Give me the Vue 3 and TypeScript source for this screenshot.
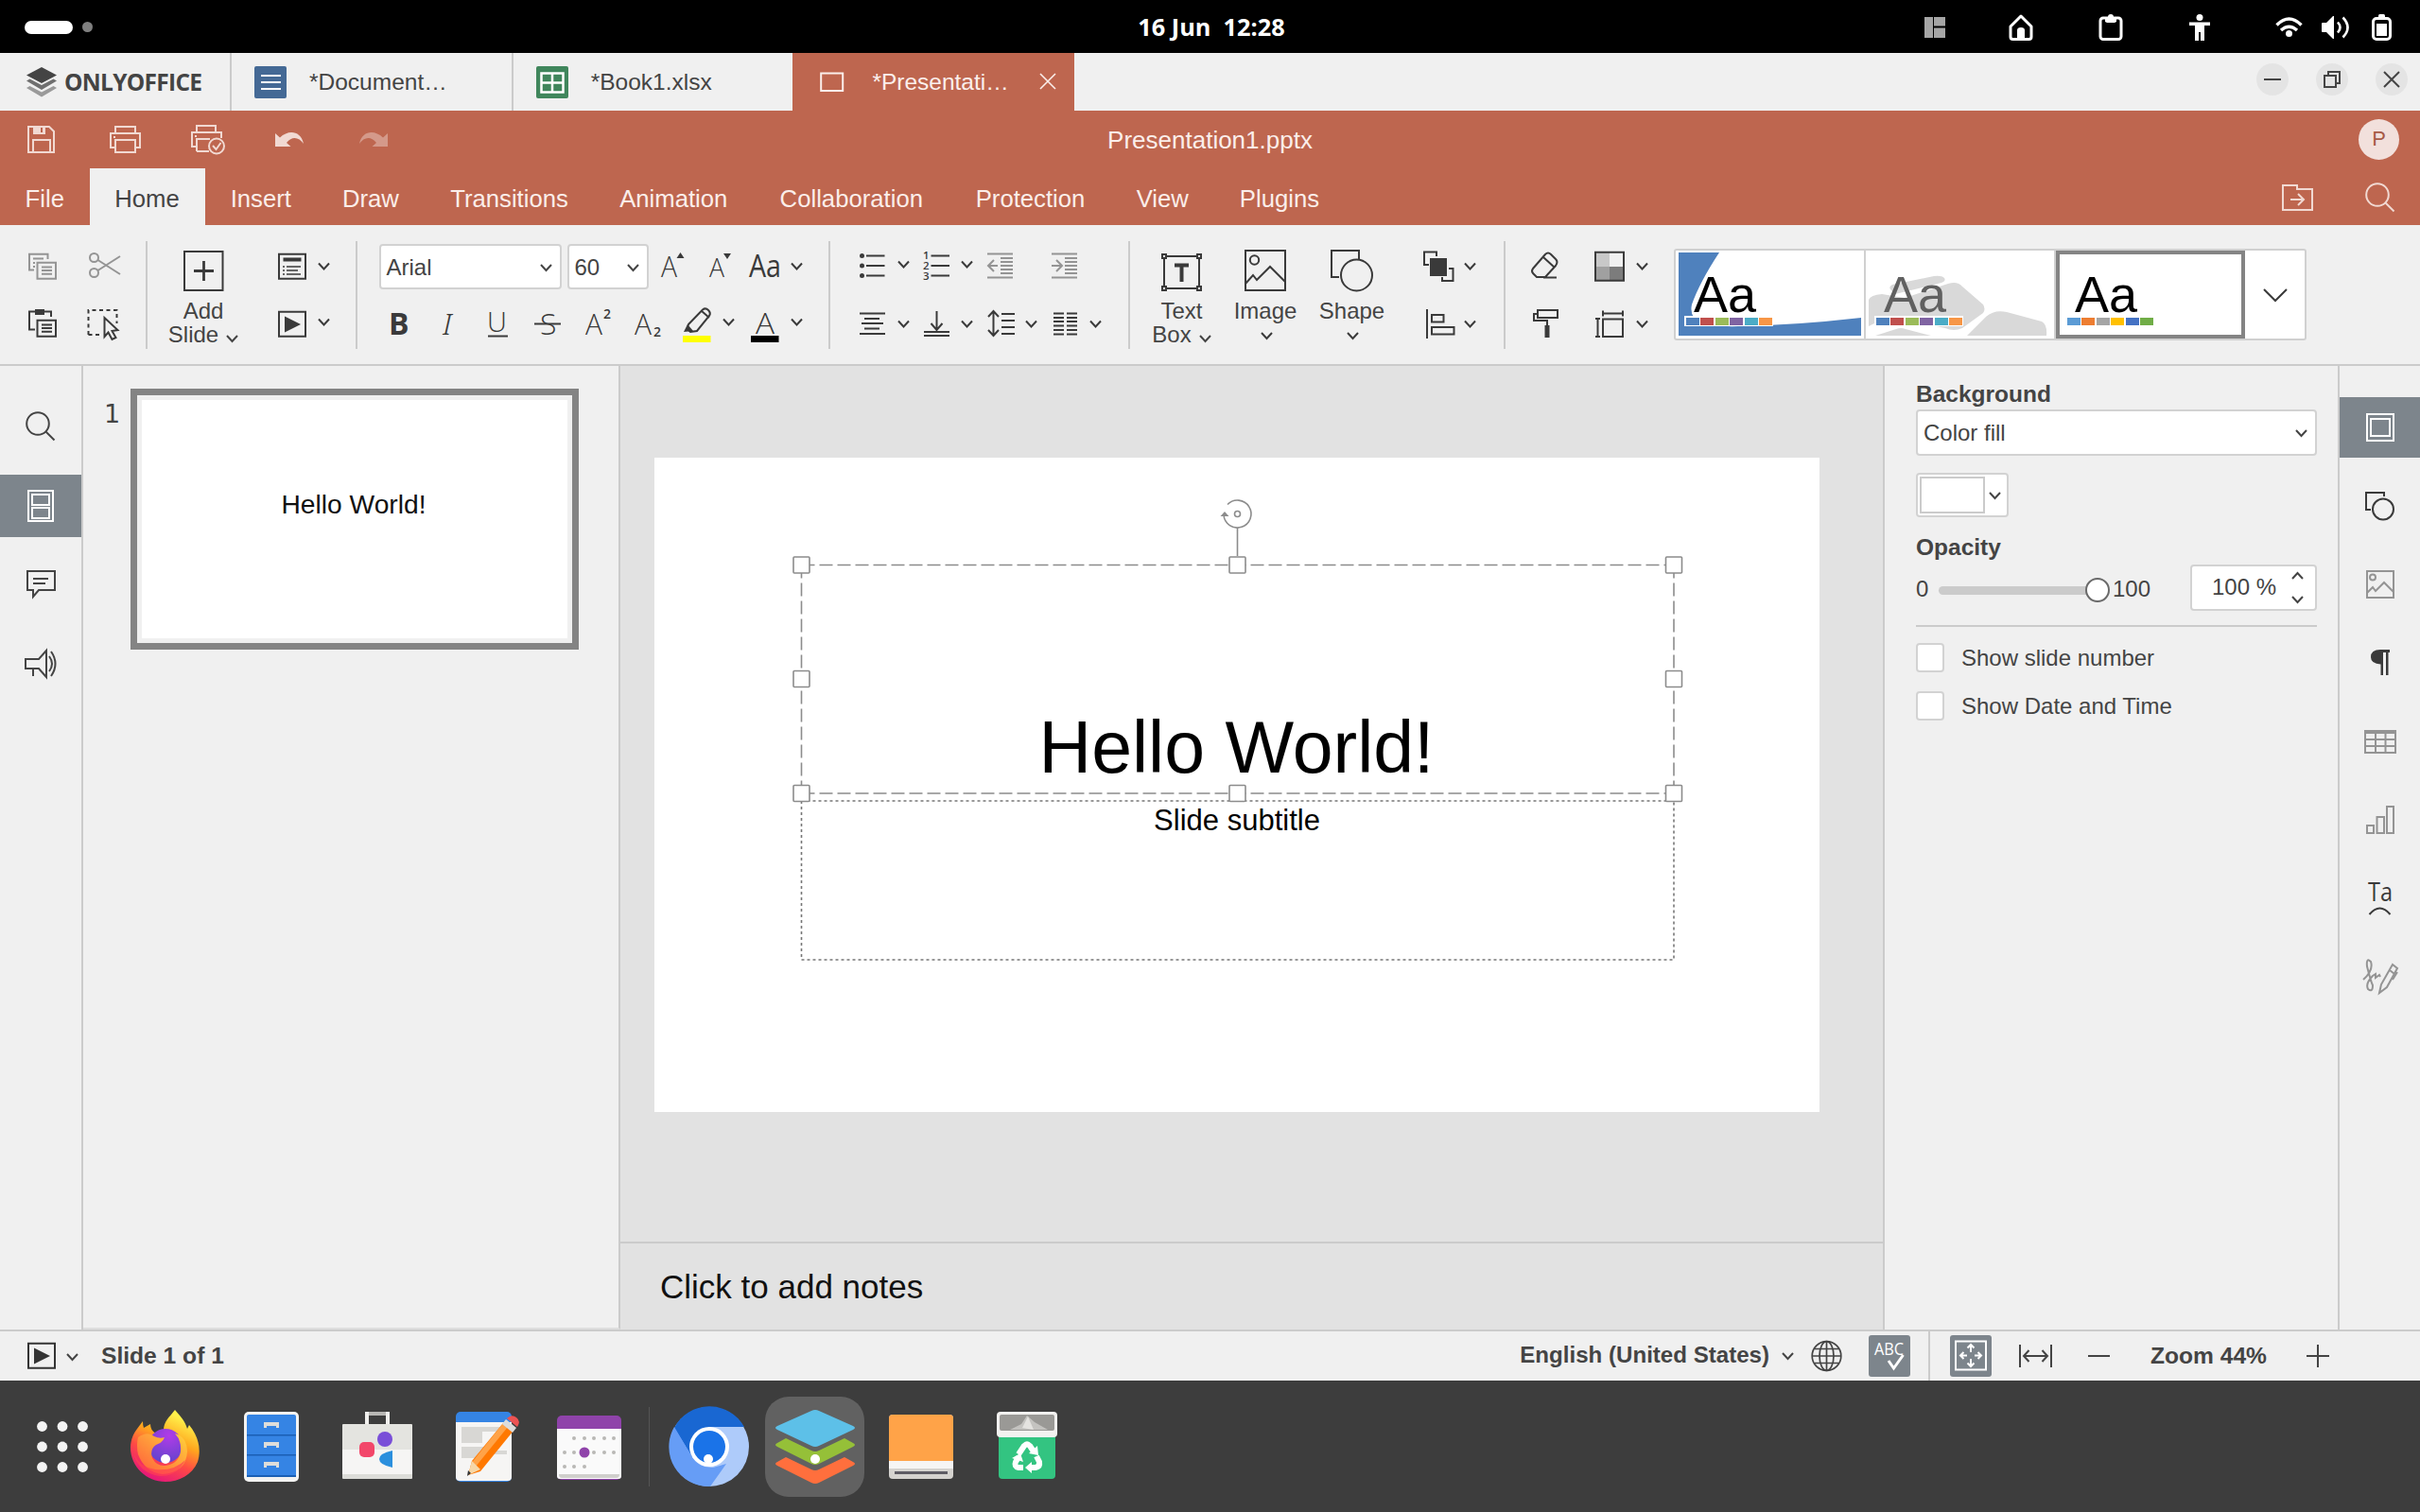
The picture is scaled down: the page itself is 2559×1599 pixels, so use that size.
<script setup lang="ts">
import { h, type FunctionalComponent } from 'vue'

type Glyph = [width: number, height: number, markup: string]

const glyphs: Record<string, Glyph> = {
  // system bar
  tiling: [22, 22, '<g fill="#a6a6a6" stroke="none"><path d="M0 0h9v22H0zM10 0h12v9.500H10zM10 11.500h12V22H10z"/></g>'],
  home: [26, 28, '<path stroke-width="3" stroke-linejoin="round" d="M13 2 2 13v11q0 2.500 2.500 2.500h17Q24 26.500 24 24V13z"/><path fill="currentColor" stroke="none" d="M9 27V17q0-3 4-3t4 3v10z"/>'],
  clipboard: [26, 28, '<rect x="2" y="4" width="22" height="22.500" rx="3" stroke-width="3"/><path fill="currentColor" stroke="none" d="M7 3h3q0-3 3-3t3 3h3v5l-2 1H9L7 8z"/>'],
  person: [22, 28, '<g fill="currentColor" stroke="none"><circle cx="11" cy="3.500" r="3.500"/><path d="M0 8.500h22V12h-6v16h-4v-9h-2v9H6V12H0z"/></g>'],
  wifi: [29, 22, '<g stroke-width="3.400"><path d="M1.500 8.500Q14.500-4.500 27.500 8.500"/><path d="M6 14q8.500-7.500 17 0"/></g><circle cx="14.500" cy="17.500" r="3.500" fill="currentColor" stroke="none"/>'],
  volume: [29, 26, '<path fill="currentColor" stroke="none" d="M0 9q0-1 1-1h4l7-7h1v24h-1l-7-7H1q-1 0-1-1z"/><path stroke-width="2.600" d="M17 7.500q5 5.500 0 11M22.500 2.500q10 10.500 0 21"/>'],
  battery: [21, 28, '<rect x="1.500" y="4.500" width="18" height="22" rx="3.500" stroke-width="3"/><rect x="7" y="0" width="7" height="4" rx="1.500" fill="currentColor" stroke="none"/><path fill="currentColor" stroke="none" d="M5 10h11v13H5z"/>'],
  // window tabs
  brand: [32, 32, '<g stroke="none" fill="#444"><path d="M16 0 32 8.500 16 17 0 8.500z"/><path opacity=".75" d="m0 14.500 3.500-2L16 19l12.500-6.500 3.500 2L16 24z"/><path opacity=".5" d="m0 22 3.500-2L16 26.500 28.500 20l3.500 2L16 31.500z"/></g>'],
  doc: [34, 34, '<rect width="34" height="34" rx="2" fill="#446995" stroke="none"/><path stroke="#fff" d="M7 10h21M7 17h21M7 24h21"/>'],
  sheet: [34, 34, '<rect width="34" height="34" rx="2" fill="#40865c" stroke="none"/><path stroke="#fff" stroke-width="2.500" d="M5.500 7.500h23v20h-23zM17 7.500v20M5.500 17.500h23"/>'],
  deck: [26, 22, '<rect x="1.200" y="1.500" width="23" height="18.500"/>'],
  x: [18, 18, '<path d="m1 1 16 16M17 1 1 17"/>'],
  min: [18, 4, '<path d="M0 2h18"/>'],
  restore: [18, 18, '<path d="M1 5h12v12H1zM5 5V1h12v12h-4"/>'],
  // quick access
  save: [29, 29, '<path d="M1 1h22l5 5v22H1zM6 28V15h18v13"/><path fill="currentColor" stroke="none" d="M6 1h13v8H6z"/><path stroke="#be664f" d="M15 2v5"/>'],
  print: [33, 29, '<path d="M6 8V1h21v7M6 23H1V8h31v15h-5M6 15h21v13H6z"/><path d="M4 12h2"/>'],
  qprint: [36, 31, '<path d="M6 8V1h20v7M6 23H1V8h31v6M6 28V15h14M6 28h13"/><path d="M4 12h2"/><circle cx="27" cy="22.500" r="8"/><path d="m23 22 3.500 4 5-7"/>'],
  undo: [30, 18, '<path fill="currentColor" stroke="none" d="M0 2l5 4.500C14-2 27-1 30 13c-5-7-12-8.500-18-1l4.500 4H0z"/>'],
  redo: [30, 18, '<path fill="currentColor" stroke="none" d="M30 2l-5 4.500C16-2 3-1 0 13c5-7 12-8.500 18-1l-4.500 4H30z"/>'],
  folder: [33, 28, '<path d="M1 1h15v4h16v22H1zM9 16h14m-6-6 6 6-6 6"/>'],
  search: [32, 32, '<circle cx="13" cy="13" r="11.800"/><path d="m21.500 21.500 9 9"/>'],
  // ribbon, 36px tall cells
  chev: [13, 36, '<path d="m1 14.500 5.500 6 5.500-6"/>'],
  chevUp: [13, 36, '<path d="m1 12.500 5.500 6 5.500-6"/>'],
  copy: [31, 36, '<path d="M6 21.500H1V4.700h19.500V10M5 9.500h11M5 14h2M5 18h2M9.500 13.700h19.500v17H9.500zM14 18.500h11M14 22h11M14 25.700h11"/>'],
  cut: [34, 36, '<circle cx="5.500" cy="8.500" r="4.500"/><circle cx="5.500" cy="24.500" r="4.500"/><path d="m9.500 11 23.500 15M9.500 22 33 7"/>'],
  paste: [31, 36, '<path d="M7 23.500H1v-19h23V10M9.500 13.700h19.500v17H9.500zM14 18.500h11M14 22h11M14 25.700h11"/><path fill="currentColor" stroke="none" d="M7 2h10v6H7z"/>'],
  select: [36, 36, '<path stroke-dasharray="4 3.500" d="M1.500 29V3h30v14M1.500 29H16"/><path fill="#f0f0f0" d="M18.500 11v20l4-4.500 4 7.500 4-2-4-7 6-1z"/>'],
  layout: [31, 36, '<path d="M1 4.700h28v26H1z"/><path stroke-width="4" d="M5.500 10.500h19"/><path stroke-width="1.600" d="M5 18h2m2 0h15M5 22h2m2 0h12M5 26h2m2 0h15"/>'],
  play: [31, 36, '<path d="M1 4.700h28v26H1z"/><path fill="currentColor" stroke="none" d="M7 9.500 24 18 7 26.500z"/>'],
  grow: [26, 36, '<text x="0" y="28.500" font-size="32" textLength="17" lengthAdjust="spacingAndGlyphs" font-weight="300">A</text><path fill="currentColor" stroke="none" d="m20.500 3 4 6h-8z"/>'],
  shrink: [24, 36, '<text x="0" y="28.500" font-size="28" textLength="16" lengthAdjust="spacingAndGlyphs" font-weight="300">A</text><path fill="currentColor" stroke="none" d="m19 10-4-6h8z"/>'],
  caseAa: [35, 36, '<text x="0" y="29" font-size="33" textLength="34" lengthAdjust="spacingAndGlyphs">Aa</text>'],
  bold: [20, 36, '<text x="-2" y="28.500" font-size="32" font-weight="700">B</text>'],
  italic: [20, 36, '<text x="1" y="28.500" font-size="32" font-style="italic" font-weight="300" style="font-family:\'Noto Sans\',sans-serif">I</text>'],
  under: [22, 36, '<text x="-1" y="26" font-size="29" font-weight="300">U</text><path d="M0 30.500h21"/>'],
  strike: [28, 36, '<text x="6" y="28.500" font-size="32" font-weight="300">S</text><path d="M0 17.500h28"/>'],
  sup: [29, 36, '<text x="0" y="28.500" font-size="32" textLength="18" lengthAdjust="spacingAndGlyphs" font-weight="300">A</text><text x="19" y="12" font-size="14" font-weight="600">2</text>'],
  sub: [30, 36, '<text x="0" y="28.500" font-size="32" textLength="18" lengthAdjust="spacingAndGlyphs" font-weight="300">A</text><text x="20" y="31" font-size="14" font-weight="600">2</text>'],
  marker: [31, 38, '<path fill="#ff0" stroke="none" d="M0 30h29.500v7H0z"/><path d="m6 18 15-15.500q3-2.500 6 .5t1 6L15 25l-7 1q-4-3-2-8zM20 4l8 7"/><path fill="currentColor" stroke="none" d="m5 18 6 7-10 1z"/>'],
  color: [31, 38, '<path fill="#000" stroke="none" d="M0 30h29.500v7H0z"/><text x="5" y="28" font-size="32" textLength="20" lengthAdjust="spacingAndGlyphs" font-weight="300">A</text>'],
  bullets: [27, 36, '<path d="M7 6.500h19.500M7 17h19.500M7 27.500h19.500"/><g fill="currentColor" stroke="none"><circle cx="2.500" cy="6.500" r="2.500"/><circle cx="2.500" cy="17" r="2.500"/><circle cx="2.500" cy="27.500" r="2.500"/></g>'],
  numbers: [27, 36, '<path d="M7.500 6.500h19.500M7.500 17h19.500M7.500 27.500h19.500"/><g font-size="11.500" font-weight="600"><text x="-1" y="10">1</text><text x="-1" y="21">2</text><text x="-1" y="32">3</text></g>'],
  outdent: [27, 36, '<path d="M0 4.500h27M14 9h13M14 13h13M14 17h13M14 21h13M14 25h13M0 29.500h27M11 17H1m6-6-6 6 6 6"/>'],
  indent: [27, 36, '<path d="M0 4.500h27M14 9h13M14 13h13M14 17h13M14 21h13M14 25h13M0 29.500h27M0 17h11m-6-6 6 6-6 6"/>'],
  center: [27, 36, '<path d="M0 6.500h27M5 12h16M2 17h23M5 22.500h16M0 28h27"/>'],
  valign: [27, 36, '<path d="M13.500 4v20m-6-7 6 7 6-7M0 26h27M0 30h27"/>'],
  spacing: [29, 36, '<path d="M6.500 4v26M1 10l5.500-6L12 10M1 24l5.500 6 5.500-6M15 7h14M15 14h14M15 21h14M15 28h14"/>'],
  columns: [26, 36, '<path d="M0 6.500h11M0 11h11M0 15h11M0 19.500h11M0 24h11M0 28.500h11M14 6.500h11M14 11h11M14 15h11M14 19.500h11M14 24h11M14 28.500h11"/>'],
  arrange: [33, 36, '<path d="M6 16H1V2.500h13V7M20 29v4h11.500V20H27"/><path fill="currentColor" stroke="none" d="M7 9h18v19H7z"/>'],
  alignShape: [31, 36, '<path d="M1 2v31M6 8h12.500v7.500H6zM6 21h23.500v7.500H6z"/>'],
  eraser: [30, 36, '<path d="m2 20 13-15q3-3 6 0l5 5q3 3 0 7L15 29H6l-4-4q-2-2.500 0-5zM13 8l12 11M13 29.500h14"/>'],
  roller: [27, 36, '<path d="M5 3h21v8H5zM5 7H1v7h14v6"/><path fill="currentColor" stroke="none" d="M12.500 19h5v13h-5z"/>'],
  scheme: [32, 36, '<g stroke="none"><path fill="#c8c8c8" d="M1 3h15v15H1z"/><path fill="#a0a0a0" d="M1 18h15v14H1z"/><path fill="#7c7c7c" d="M16 18h15v14H16z"/></g><path d="M1 2.700h30v30H1z"/>'],
  slideSize: [30, 36, '<path d="M8 12.500h21V31H8zM8 6.500h21M8 3.500v6M29 3.500v6M2.500 12v19M0 12h5M0 31h5"/>'],
  add: [43, 43, '<path d="M1 1h40.500v41H1z"/><path stroke-width="2.800" d="M21.500 11v21M11 21.500h21"/>'],
  textbox: [43, 43, '<path d="M3 6h37v34H3z"/><g fill="#f0f0f0"><path d="M1 4h4v4H1zM38 4h4v4h-4zM1 38h4v4H1zM38 38h4v4h-4z"/></g><path stroke-width="4" d="M14 15.500h15M21.500 15v18"/>'],
  image: [44, 44, '<path d="M1 1h42v42H1z"/><circle cx="10.500" cy="11" r="4.700"/><path d="m1 36 8-9 4 5 14-14 16 16"/>'],
  shape: [46, 44, '<path d="M9 29H1V1h29v9"/><circle cx="27.500" cy="27" r="16.500"/>'],
  more: [26, 14, '<path d="m1 1 12 12L25 1"/>'],
  // side bars
  thumbs: [28, 34, '<path d="M1 1h26v32H1z"/><path d="M5 5h18v11H5zM5 19h18v11H5z"/>'],
  comment: [31, 30, '<path d="M1 1h29v20H13l-6 7v-7H1zM7 9h16M7 14h13"/>'],
  horn: [34, 30, '<path d="M1 10h14l8-9v28l-8-9H1zM9 20v8M26 7q6 8 0 16M28 2q9 13 0 26"/>'],
  sSlide: [30, 30, '<path d="M1 1h28v28H1z"/><path d="M5 6h20v18H5z"/>'],
  sShape: [31, 31, '<path d="M6 19H1V1h19v4"/><circle cx="19" cy="18.500" r="11"/>'],
  sImage: [30, 30, '<path d="M1 1h28v28H1z"/><circle cx="7" cy="7.500" r="3"/><path d="m1 24 6-6 3 4 9-9 10 10"/>'],
  para: [20, 28, '<path fill="currentColor" stroke="none" d="M20 0v3h-1.500v24h-2.500V3h-3v24h-2.500V15.500Q0 15 0 8 0 0 10 0z"/>'],
  table: [34, 25, '<path d="M1 1h32v23H1zM1 3h32M1 10h32M1 17h32M12 3v21M22.500 3v21"/>'],
  chart: [30, 30, '<path d="M1 21h7v8H1zM11.500 12H19v17h-7.500zM22 1h7v28h-7z"/>'],
  textArt: [28, 36, '<text x="1" y="21" font-size="28" textLength="26" lengthAdjust="spacingAndGlyphs">Ta</text><path d="M2.500 35q11-13 22 0"/>'],
  sign: [38, 38, '<path d="M1 22Q12 12 9 3 4-2 5 8q4 16 6 20 0 8-5 4-3-6 5-14l3-2v4l4-3 1 2M18 36l2-9L32 6l5 4-11 20zM29 12l5 4M32 22l5-8"/>'],
  // status bar
  globe: [33, 34, '<circle cx="16.500" cy="17" r="15.300"/><ellipse cx="16.500" cy="17" rx="7.500" ry="15.300"/><path d="M16.500 1v32M4 9.500h25M1 17h31M4 24.500h25"/>'],
  spell: [32, 34, '<text x="0" y="16" font-size="19" textLength="31" lengthAdjust="spacingAndGlyphs">ABC</text><path stroke-width="3" d="m15 22 5.500 8 10-14"/>'],
  fit: [34, 34, '<path d="M1 1.500h32v30H1zM17 5v8M17 20v8M6 16.500h7M21 16.500h7M13.500 8.500 17 5l3.500 3.500M13.500 24.500 17 28l3.500-3.500M9.500 13 6 16.500 9.500 20M24.500 13l3.500 3.500-3.500 3.500"/>'],
  fitWidth: [35, 24, '<path d="M1 0v24M34 0v24M5 12h25M10.500 6 5 12l5.500 6M24.500 6l5.500 6-5.500 6"/>'],
  minus: [23, 24, '<path d="M0 12h23"/>'],
  plus: [24, 24, '<path d="M0 12h24M12 0v24"/>'],
  spinUp: [13, 8, '<path d="m1 7 5.500-6L12 7"/>'],
  down: [13, 8, '<path d="m1 1 5.500 6L12 1"/>'],
  // dock
  apps: [54, 54, '<g fill="#f4f4f4" stroke="none">' + [5.5, 27, 48.5].map(y => [5.5, 27, 48.5].map(x => `<circle cx="${x}" cy="${y}" r="5.400"/>`).join('')).join('') + '</g>'],
  firefox: [76, 84, `<defs><linearGradient id="ff" x1=".75" y1="0" x2=".3" y2="1"><stop offset=".1" stop-color="#fff04a"/><stop offset=".4" stop-color="#ffa61e"/><stop offset=".65" stop-color="#ff4a45"/><stop offset="1" stop-color="#e3127f"/></linearGradient><radialGradient id="fp" cx=".6" cy=".2" r=".9"><stop offset="0" stop-color="#b13be8"/><stop offset="1" stop-color="#5b45c9"/></radialGradient><linearGradient id="fo" x1="1" y1="0" x2="0" y2="1"><stop offset="0" stop-color="#ffd53a"/><stop offset="1" stop-color="#ff5a3c"/></linearGradient></defs><g stroke="none"><path fill="url(#ff)" d="M48 3c8 9 11 13 13 20l2-4c10 12 13 26 9 39-6 14-20 21-34 21C18 79 1 63 1 43c0-8 3-15 7-20l6-8q0 5 1 7l7-4q0 7 6 10l8-3C36 15 42 11 48 3z"/><circle cx="38" cy="41" r="18" fill="url(#fp)"/><path fill="url(#fo)" d="M9 32q10-7 17-1 6 3 11 1-2 6-9 8-7 5-4 14 5 9 14 8 14-2 16-15 1-12-6-19 13 4 13 19-1 22-26 24Q16 69 9 50q-2-9 0-18z"/><path fill="#ff3e52" opacity=".7" d="M3 46q6 17 24 20 20 2 32-10-9 18-27 17Q9 70 3 46z"/><circle cx="38" cy="55" r="5" fill="#fff"/></g>`],
  files: [58, 84, '<g stroke="none"><rect y="5" width="58" height="74" rx="5" fill="#f3f3f2"/><rect x="3" y="8" width="52" height="66" rx="2" fill="#3584e4"/><g fill="#1a5fb4"><path d="M3 29h52v1.500H3zM3 50h52v1.500H3zM3 72h52v2H3z"/></g><g fill="#deddda"><path d="M21 16h16v6h-3v-2H24v2h-3zM21 37h16v6h-3v-2H24v2h-3zM21 58h16v6h-3v-2H24v2h-3z"/></g></g>'],
  store: [74, 84, '<path stroke="#f0efed" stroke-width="4" d="M26 20V7h22v13"/><path stroke="#b8b7b4" stroke-width="4" d="M28 7h18"/><g stroke="none"><path fill="#e4e4e0" d="M0 19q0-1 1-1h72q1 0 1 1v27H0z"/><path fill="#f6f5f4" d="M0 45h74v26H0z"/><path fill="#dcdcd8" d="M0 71h74v4q0 1-1 1H1q-1 0-1-1z"/><circle cx="45" cy="34" r="8" fill="#7a4fd8"/><rect x="18" y="37" width="16" height="16" rx="5" fill="#f2476a"/><path fill="#2b8fdd" d="M53 46v18q-14-3-14-9 0-6 14-9z"/></g>'],
  editor: [66, 84, '<g stroke="none"><rect y="5" width="59" height="74" rx="5" fill="#3584e4"/><path fill="#f6f5f4" d="M0 16h59v58q0 4-4 4H4q-4 0-4-4z"/><path fill="#d8d7d4" d="M6 21h44v5H28v12H6zM6 42h34v4h14v4H36v4H6z"/><path fill="#ff7800" d="M50 17 61 25 26 68l-13 4 4-15z"/><path fill="#ffa348" d="m50 17 5 4-34 42-5-3z"/><path fill="#f6d7a8" d="m17 57 9 9-13 6z"/><path fill="#333" d="m13 67 3 3-4 3z"/><path fill="#dcdcdc" d="m53 13 11 9-4 5-11-9z"/><path fill="#ed5353" d="M54 12q5-5 10-1t1 10z"/></g>'],
  calendar: [68, 84, '<g stroke="none"><rect y="9" width="68" height="68" rx="5" fill="#8f43aa"/><path fill="#fafafa" d="M0 23h68v50q0 3-3 3H3q-3 0-3-3z"/><path fill="#d0cfcc" d="M2 71h64q0 4-3 4H5q-3 0-3-4z"/><circle cx="29" cy="48" r="5.500" fill="#8f43aa"/><g fill="#b9b8b5">' + [18, 29, 39, 50, 60].map(x => `<circle cx="${x}" cy="33" r="2"/>`).join('') + [8, 18, 39, 50, 60].map(x => `<circle cx="${x}" cy="48" r="2"/>`).join('') + [8, 18, 29].map(x => `<circle cx="${x}" cy="63" r="2"/>`).join('') + '</g></g>'],
  chromium: [84, 84, '<g stroke="none"><circle cx="42" cy="42" r="42" fill="#aecbfa"/><path fill="#1967d2" d="M5 22A42 42 0 0 1 79 21H42L24 53z"/><path fill="#669df6" d="M5 21 24 53q8 12 22 11l14-4-17 24A42 42 0 0 1 5 21z"/><circle cx="42" cy="42" r="21" fill="#fff"/><circle cx="42" cy="42" r="17" fill="#1a73e8"/><circle cx="41" cy="55" r="5" fill="#fff"/></g>'],
  office: [84, 84, '<g stroke="none"><path fill="#ff6f3d" d="m11 53 27 13q4 2 8 0l27-13 9 5q4 2 0 4L46 80q-4 2-8 0L2 62q-4-2 0-4z"/><path fill="#95c038" d="m11 33 27 13q4 2 8 0l27-13 9 5q4 2 0 4L46 60q-4 2-8 0L2 42q-4-2 0-4z"/><path fill="#5dc0e8" d="M2 20 38 4q4-2 8 0l36 16q4 2 0 4L46 41q-4 2-8 0L2 24q-4-2 0-4z"/><circle cx="42" cy="55" r="5" fill="#fff"/></g>'],
  drive: [68, 84, '<g stroke="none"><rect y="8" width="68" height="68" rx="4" fill="#d5d3cf"/><path fill="#f6f5f4" d="M0 56h68v9H0z"/><path fill="#ffa348" d="M0 57V12q0-4 4-4h60q4 0 4 4v45z"/><path fill="#5e5c64" d="M6 68h56v3H6z"/></g>'],
  trash: [64, 84, '<g stroke="none"><path fill="#33c481" d="M2 30h60v42q0 4-4 4H6q-4 0-4-4z"/><rect y="5" width="64" height="27" rx="4" fill="#f3f2f0"/><rect x="3" y="8" width="58" height="17" rx="2" fill="#9a9996"/><path fill="#c4c3c0" d="m14 24 12-6 6-9 8 7 14 8z"/><path fill="#e4e3e0" d="m27 22 6-12 6 14z"/></g><g stroke="#fff" stroke-width="6"><path d="m23 50 6-9q3-3 6 0l4 6"/><path d="m42 52 3 6q1 5-4 6h-5"/><path d="M28 64h-5q-5-1-3-6l3-5"/></g><g fill="#fff" stroke="none"><path d="m43 41 1 10-10-2zM37 58v12l-7-6zM16 54l9-5 3 9z"/></g>'],
}

const Ico: FunctionalComponent<{ n: string }> = (p) => {
  const [w, ht, body] = glyphs[p.n]
  return h('svg', { class: 'ico', width: w, height: ht, viewBox: `0 0 ${w} ${ht}`, innerHTML: body })
}
Ico.props = ['n']

type Cell = [icon: string, width: number, dim?: boolean]

const menu: [string, number][] = [
  ['File', 94.5], ['Home', 122], ['Insert', 118.5], ['Draw', 113.8], ['Transitions', 179.5],
  ['Animation', 168], ['Collaboration', 208], ['Protection', 170.5], ['View', 109], ['Plugins', 138.4],
]
const clip: Cell[][] = [[['', 30], ['copy', 64, true], ['cut', 40, true]], [['', 30], ['paste', 62], ['select', 40]]]
const slideTools: Cell[][] = [[['', 20], ['layout', 42], ['chev', 13]], [['', 20], ['play', 42], ['chevUp', 13]]]
const fontSize: Cell[] = [['grow', 51], ['shrink', 42.5], ['caseAa', 43.5], ['chev', 13]]
const fontStyle: Cell[] = [
  ['', 35], ['bold', 53.5], ['italic', 49], ['under', 49], ['strike', 54], ['sup', 52.5], ['sub', 51],
  ['marker', 41.5], ['chevUp', 30], ['color', 42], ['chevUp', 13],
]
const para: Cell[][] = [
  [['', 31], ['bullets', 39.5], ['chevUp', 28], ['numbers', 39], ['chevUp', 28], ['outdent', 68, true], ['indent', 27, true]],
  [['', 31], ['center', 39.5], ['chev', 28], ['valign', 39], ['chev', 28], ['spacing', 40], ['chev', 30], ['columns', 38], ['chev', 13]],
]
const arrange: Cell[][] = [[['', 18], ['arrange', 43], ['chev', 13]], [['', 20.5], ['alignShape', 40.5], ['chev', 13]]]
const design: Cell[][] = [[['', 27], ['eraser', 66.5], ['scheme', 44], ['chev', 13]], [['', 29], ['roller', 66], ['slideSize', 42.5], ['chev', 13]]]

const office = ['#4f81bd', '#c0504d', '#9bbb59', '#8064a2', '#4bacc6', '#f79646']
const blank = ['#5b9bd5', '#ed7d31', '#a5a5a5', '#ffc000', '#4472c4', '#70ad47']

const rail: [string, boolean, boolean][] = [
  ['sSlide', true, false], ['sShape', false, false], ['sImage', false, true], ['para', false, false],
  ['table', false, true], ['chart', false, true], ['textArt', false, false], ['sign', false, true],
]
const handles: [number, number][] = [
  [155.5, 113.5], [616.5, 113.5], [1078, 113.5], [155.5, 234], [1078, 234], [155.5, 355], [616.5, 355], [1078, 355],
]
</script>

<template>
  <div class="screen">
    <div class="sys">
      <div class="ws"><i class="pill"></i><i class="dot"></i></div>
      <div class="clock">16 Jun&nbsp; 12:28</div>
      <div class="tray">
        <Ico n="tiling" class="t1" /><Ico n="home" class="t2" /><Ico n="clipboard" class="t3" /><Ico n="person" class="t4" />
        <Ico n="wifi" class="t5" /><Ico n="volume" class="t6" /><Ico n="battery" />
      </div>
    </div>

    <div class="tabs">
      <div class="logo"><Ico n="brand" /><b>ONLYOFFICE</b></div>
      <div class="tab"><Ico n="doc" /><span>*Document…</span></div>
      <div class="tab"><Ico n="sheet" /><span>*Book1.xlsx</span></div>
      <div class="tab on"><Ico n="deck" /><span>*Presentati…</span><Ico n="x" class="close" /></div>
      <div class="win">
        <i><Ico n="min" /></i><i><Ico n="restore" /></i><i><Ico n="x" /></i>
      </div>
    </div>

    <div class="head">
      <div class="quick">
        <div class="qa"><Ico n="save" /><Ico n="print" class="q2" /><Ico n="qprint" class="q3" /><Ico n="undo" class="q4" /><Ico n="redo" class="q5" /></div>
        <div class="title">Presentation1.pptx</div>
        <div class="avatar">P</div>
      </div>
      <div class="menu">
        <div v-for="m in menu" :key="m[0]" class="mi" :class="{ on: m[0] === 'Home' }" :style="{ width: m[1] + 'px' }">{{ m[0] }}</div>
        <div class="mr"><Ico n="folder" /><Ico n="search" /></div>
      </div>
    </div>

    <div class="ribbon">
      <div class="grp g1">
        <div v-for="(r, k) in clip" :key="k" class="row">
          <div v-for="(c, j) in r" :key="j" class="cell" :class="{ dim: c[2] }" :style="{ width: c[1] + 'px' }"><Ico v-if="c[0]" :n="c[0]" /></div>
        </div>
      </div>
      <i class="sep"></i>
      <div class="big b1"><Ico n="add" /><div class="lb">Add</div><div class="lb">Slide <Ico n="down" /></div></div>
      <div class="grp g2">
        <div v-for="(r, k) in slideTools" :key="k" class="row">
          <div v-for="(c, j) in r" :key="j" class="cell" :style="{ width: c[1] + 'px' }"><Ico v-if="c[0]" :n="c[0]" /></div>
        </div>
      </div>
      <i class="sep"></i>
      <div class="grp g3">
        <div class="row">
          <div class="combo font">Arial<Ico n="down" /></div>
          <div class="combo size">60<Ico n="down" /></div>
          <div v-for="(c, j) in fontSize" :key="j" class="cell" :style="{ width: c[1] + 'px' }"><Ico :n="c[0]" /></div>
        </div>
        <div class="row">
          <div v-for="(c, j) in fontStyle" :key="j" class="cell" :style="{ width: c[1] + 'px' }"><Ico v-if="c[0]" :n="c[0]" /></div>
        </div>
      </div>
      <i class="sep"></i>
      <div class="grp g4">
        <div v-for="(r, k) in para" :key="k" class="row">
          <div v-for="(c, j) in r" :key="j" class="cell" :class="{ dim: c[2] }" :style="{ width: c[1] + 'px' }"><Ico v-if="c[0]" :n="c[0]" /></div>
        </div>
      </div>
      <i class="sep"></i>
      <div class="big b2"><Ico n="textbox" /><div class="lb">Text</div><div class="lb">Box <Ico n="down" /></div></div>
      <div class="big b3"><Ico n="image" /><div class="lb">Image</div><Ico n="down" class="bc" /></div>
      <div class="big b4"><Ico n="shape" /><div class="lb">Shape</div><Ico n="down" class="bc" /></div>
      <div class="grp g5">
        <div v-for="(r, k) in arrange" :key="k" class="row">
          <div v-for="(c, j) in r" :key="j" class="cell" :style="{ width: c[1] + 'px' }"><Ico v-if="c[0]" :n="c[0]" /></div>
        </div>
      </div>
      <i class="sep"></i>
      <div class="grp g6">
        <div v-for="(r, k) in design" :key="k" class="row">
          <div v-for="(c, j) in r" :key="j" class="cell" :style="{ width: c[1] + 'px' }"><Ico v-if="c[0]" :n="c[0]" /></div>
        </div>
      </div>
      <div class="gallery">
        <div class="theme">
          <svg class="art" width="193" height="88" viewBox="0 0 193 88"><path fill="#4f81bd" d="M0 0h43Q22 32 14 55q-3 14 10 18 15 6 39 5 60-1 130-9v19H0z" /></svg>
          <div class="aa">Aa</div><div class="pal"><i v-for="c in office" :key="c" :style="{ background: c }"></i></div>
        </div>
        <div class="theme">
          <svg class="art" width="193" height="88" viewBox="0 0 193 88"><g fill="#d9d9d9"><path d="M23 39q-2-3 2-5l44-9q8-1 11 2 2 3-3 5L28 44z" /><path d="M0 50q2-5 14-6l24 4 46-15q10-3 15 3l22 19q3 5 0 9L99 80q-9 4-18 0L20 68 0 78z" /><path d="m7 88 22-7q5-2 10 0l27 7zM104 88l20-20q9-8 22-5l37 10q6 3 5 15z" /></g></svg>
          <div class="aa gray">Aa</div><div class="pal"><i v-for="c in office" :key="c" :style="{ background: c }"></i></div>
        </div>
        <div class="theme sel">
          <div class="aa">Aa</div><div class="pal"><i v-for="c in blank" :key="c" :style="{ background: c }"></i></div>
        </div>
        <div class="gm"><Ico n="more" /></div>
      </div>
    </div>

    <div class="main">
      <div class="lrail">
        <i><Ico n="search" /></i><i class="on"><Ico n="thumbs" /></i><i><Ico n="comment" /></i><i><Ico n="horn" /></i>
      </div>
      <div class="slides">
        <div class="num">1</div>
        <div class="thumb"><div class="mini">Hello World!</div></div>
      </div>
      <div class="work">
        <div class="canvas">
          <div class="slide">
            <div class="ph t">Hello World!</div>
            <div class="ph s">Slide subtitle</div>
            <svg class="frame" width="1232" height="692" viewBox="0 0 1232 692" fill="none" stroke="#8c8c8c" stroke-width="1.600">
              <rect x="155.500" y="363" width="922.500" height="168" stroke="#777" stroke-dasharray="3 3" />
              <path stroke-dasharray="14 5" d="M155.500 113.500H1078M155.500 355H1078M155.500 113.500V355M1078 113.500V355" />
              <path d="M616.500 74v30" />
              <path d="M606 49.500a14.500 14.500 0 1 1-4 11" /><circle cx="616.500" cy="59.500" r="3" />
              <path fill="#8c8c8c" stroke="none" d="m603 57 4.500 5h-9z" />
              <rect v-for="(p, k) in handles" :key="k" :x="p[0] - 8.5" :y="p[1] - 8.5" width="17" height="17" rx="1" fill="#fff" />
            </svg>
          </div>
        </div>
        <div class="notes">Click to add notes</div>
      </div>
      <div class="props">
        <div class="h">Background</div>
        <div class="select">Color fill<Ico n="down" /></div>
        <div class="swatch"><i></i><Ico n="down" /></div>
        <div class="h op">Opacity</div>
        <div class="opac">
          <span class="zero">0</span><div class="track"><i class="knob"></i></div><span class="hund">100</span>
          <div class="spin"><span>100 %</span><div class="arrows"><Ico n="spinUp" /><Ico n="down" /></div></div>
        </div>
        <div class="hr"></div>
        <div class="chk"><i></i>Show slide number</div>
        <div class="chk"><i></i>Show Date and Time</div>
      </div>
      <div class="rrail">
        <i v-for="r in rail" :key="r[0]" :class="{ on: r[1], dim: r[2] }"><Ico :n="r[0]" /></i>
      </div>
    </div>

    <div class="status">
      <Ico n="play" class="s1" /><Ico n="down" class="s2" /><b class="s3">Slide 1 of 1</b>
      <div class="sr">
        <b class="s4">English (United States)</b><Ico n="down" class="s5" /><Ico n="globe" class="s6" />
        <i class="tile"><Ico n="spell" /></i><i class="vs"></i><i class="tile"><Ico n="fit" /></i>
        <Ico n="fitWidth" class="s7" /><Ico n="minus" class="s8" /><b class="s9">Zoom 44%</b><Ico n="plus" />
      </div>
    </div>

    <div class="dock">
      <Ico n="apps" class="d1" /><Ico n="firefox" class="d2" /><Ico n="files" class="d3" /><Ico n="store" class="d4" />
      <Ico n="editor" class="d5" /><Ico n="calendar" /><i class="dsep"></i><Ico n="chromium" />
      <div class="active"><Ico n="office" /></div><Ico n="drive" class="d6" /><Ico n="trash" />
    </div>
  </div>
</template>

<style>
.ico { flex: none; display: block; fill: none; stroke: currentColor; stroke-width: 2; overflow: visible; }
.ico text { fill: currentColor; stroke: none; font-family: "Open Sans", "Noto Sans", sans-serif; }
</style>

<style scoped>
.screen { width: 2559px; height: 1599px; overflow: hidden; display: flex; flex-direction: column; background: #f0f0f0; color: #444; font-family: "Liberation Sans", Arial, sans-serif; font-size: 24px; white-space: nowrap; }
.screen i { display: block; flex: none; font-style: normal; }
.screen * { box-sizing: border-box; }

.sys { height: 56px; flex: none; background: #000; color: #fff; display: grid; grid-template-columns: 1fr auto 1fr; align-items: center; }
.ws { display: flex; align-items: center; gap: 10px; padding-left: 26px; }
.pill { width: 51px; height: 14px; border-radius: 7px; background: #fff; }
.dot { width: 11px; height: 11px; border-radius: 50%; background: #808080; }
.clock { font: 700 25.300px/57px "Open Sans", "Noto Sans", sans-serif; width: 168px; text-align: center; padding-left: 3px; }
.tray { display: flex; align-items: center; justify-content: flex-end; padding-right: 30px; }
.t1 { margin-right: 67px; } .t2 { margin-right: 69px; } .t3 { margin-right: 70px; } .t4 { margin-right: 69px; } .t5 { margin-right: 20px; } .t6 { margin-right: 24px; }

.tabs { height: 61px; flex: none; display: flex; }
.logo { width: 243px; display: flex; align-items: center; padding: 0 0 0 28px; gap: 8px; }
.logo b { font: 700 24.500px/60px "Open Sans", sans-serif; letter-spacing: -.7px; color: #444; }
.tab { width: 297.700px; border-left: 2px solid #cbcbcb; display: flex; align-items: center; padding-left: 24px; font-size: 24.500px; }
.tab span { margin-left: 24px; line-height: 62px; }
.tab.on { background: #be664f; border-color: #be664f; color: #fbefec; padding-left: 27px; }
.tab.on span { margin-left: 29px; }
.close { margin-left: 32px; stroke-width: 1.600; margin-bottom: 1px; }
.win { margin-left: auto; display: flex; gap: 29px; padding: 11px 13px 0 0; }
.win i { width: 34px; height: 34px; border-radius: 50%; background: #e4e4e4; display: flex; align-items: center; justify-content: center; }

.head { height: 121px; flex: none; background: #be664f; color: #fbeeea; }
.quick { height: 61px; display: grid; grid-template-columns: 1fr auto 1fr; align-items: center; }
.qa { display: flex; align-items: center; padding-left: 29px; opacity: .85; }
.q2 { margin-left: 58px; } .q3 { margin-left: 53px; } .q4 { margin-left: 53px; } .q5 { margin-left: 59px; opacity: .45; }
.title { font-size: 26px; padding-top: 2px; }
.avatar { justify-self: end; margin-right: 22px; width: 43px; height: 43px; border-radius: 50%; background: #f2e0dc; color: #a85a46; font-size: 22px; line-height: 42px; text-align: center; }
.menu { height: 60px; display: flex; font-size: 25.700px; }
.mi { flex: none; text-align: center; line-height: 64px; }
.mi.on { background: #f0f0f0; color: #444; }
.mr { margin-left: auto; display: flex; align-items: center; gap: 55px; padding: 2px 26px 0 0; opacity: .85; }

.ribbon { height: 149px; flex: none; display: flex; border-bottom: 2px solid #cbcbcb; color: #3a3a3a; }
.sep { width: 2px; height: 114px; margin-top: 17px; background: #cbcbcb; }
.grp { padding-top: 14px; display: flex; flex-direction: column; gap: 1px; flex: none; }
.row { height: 60px; display: flex; align-items: center; }
.cell { flex: none; height: 36px; }
.dim { opacity: .5; }
.g1 { width: 154px; } .g2 { width: 102px; } .g3 { width: 498px; } .g4 { width: 315px; } .g5 { width: 103px; } .g6 { width: 178px; }
.combo { flex: none; height: 48px; background: #fff; border: 2px solid #d2d2d2; border-radius: 4px; display: flex; align-items: center; justify-content: space-between; padding: 2px 8px 0 6px; color: #444; }
.font { width: 193px; margin-left: 22.500px; } .size { width: 86px; margin: 0 13px 0 6px; }
.big { flex: none; display: flex; flex-direction: column; align-items: center; padding-top: 27px; color: #3a3a3a; }
.big .lb { line-height: 25px; color: #444; display: flex; }
.big > .ico { margin-bottom: 7.500px; }
.lb .ico { margin: 13px 0 0 8px; }
.big > .bc { margin: 10px 0 0 2px; }
.b1 { width: 118px; }
.b2 { width: 109px; } .b3 { width: 68px; } .b4 { width: 115px; }
.b3, .b4 { padding-top: 26px; }
.gallery { width: 669px; height: 97px; margin-top: 25px; border: 2px solid #d0d0d0; border-radius: 3px; background: #fff; display: flex; flex: none; }
.theme { position: relative; flex: none; width: 201px; border-right: 2px solid #d0d0d0; padding: 17px 0 0 12px; }
.art { position: absolute; left: 3px; top: 2px; }
.aa { position: relative; font-size: 54px; line-height: 56px; color: #000; padding-left: 7px; top: 1px; }
.gray { color: #606060; }
.pal { position: relative; display: flex; gap: 1.500px; padding: 1.500px; background: #fff; width: 94px; height: 11px; margin-top: -4px; margin-left: -3px; }
.pal i { width: 14px; height: 8px; }
.theme.sel { width: 200px; border: 4px solid #848484; padding: 13px 0 0 9px; }
.sel .pal { width: 96px; }
.gm { flex: 1; display: flex; align-items: center; justify-content: center; }

.main { height: 1019px; flex: none; display: flex; }
.lrail { width: 88px; border-right: 2px solid #cbcbcb; padding-top: 31px; flex: none; color: #444; }
.lrail i, .rrail i { height: 66px; display: flex; align-items: center; justify-content: center; margin-bottom: 17.500px; }
.lrail .on, .rrail .on { background: #7d858c; color: #fff; }
.slides { width: 568px; flex: none; border-right: 2px solid #cbcbcb; border-bottom: 2px solid #dedede; display: flex; padding: 24px 0 0 22px; }
.num { width: 28px; font: 27px/32px "DejaVu Sans", sans-serif; padding-top: 11px; }
.thumb { width: 474px; height: 276px; border: 7px solid #848484; padding: 5px; }
.mini { height: 252px; background: #fff; text-align: center; font-size: 28.200px; color: #111; line-height: 221px; padding-right: 2px; }
.work { width: 1335px; flex: none; display: flex; flex-direction: column; background: #e2e2e2; }
.canvas { height: 926px; padding: 97px 0 0 36px; }
.slide { position: relative; width: 1232px; height: 692px; background: #fff; color: #000; }
.frame { position: absolute; left: 0; top: 0; }
.ph { position: absolute; left: 154px; width: 923px; text-align: center; }
.t { top: 262px; font-size: 77px; line-height: 88px; }
.s { top: 366px; font-size: 31px; line-height: 36px; padding-left: 1px; }
.notes { flex: 1; border-top: 2px solid #cbcbcb; padding-left: 42px; font-size: 35px; line-height: 91px; color: #111; }
.props { width: 481px; flex: none; border-left: 2px solid #cbcbcb; padding: 15px 22px 0 33px; }
.h { font-weight: 700; line-height: 30px; font-size: 24.500px; }
.select { height: 49px; margin-top: 1px; background: #fff; border: 2px solid #d2d2d2; border-radius: 4px; display: flex; align-items: center; justify-content: space-between; padding: 0 8px 0 6px; }
.swatch { width: 98px; height: 47px; margin-top: 18px; background: #fff; border: 2px solid #d2d2d2; border-radius: 4px; display: flex; align-items: center; gap: 4px; padding-left: 2px; }
.swatch i { width: 69px; height: 39px; border: 2px solid #cbcbcb; }
.op { margin-top: 17px; }
.opac { display: flex; height: 48px; margin-top: 3px; align-items: center; }
.zero { width: 24px; line-height: 48px; padding-top: 3px; }
.track { position: relative; width: 168px; height: 9px; border-radius: 5px; background: #cbcbcb; margin-top: 7px; }
.knob { position: absolute; right: -13px; top: -9px; width: 26px; height: 26px; border-radius: 50%; border: 2px solid #6a6a6a; background: #fff; }
.hund { margin-left: 16px; line-height: 48px; padding-top: 3px; }
.spin { margin-left: auto; width: 134px; height: 49px; background: #fff; border: 2px solid #d2d2d2; border-radius: 4px; display: flex; align-items: center; justify-content: flex-end; padding-right: 12px; }
.spin span { margin: -1px 16px 0 0; }
.arrows { display: flex; flex-direction: column; gap: 17px; }
.hr { height: 2px; background: #cbcbcb; margin: 16px 0 17px; }
.chk { display: flex; align-items: center; height: 31px; margin-bottom: 20px; line-height: 28px; }
.chk i { width: 30px; height: 31px; border: 2px solid #d2d2d2; border-radius: 4px; background: #fff; margin-right: 18px; }
.rrail { flex: 1; border-left: 2px solid #cbcbcb; padding-top: 33px; color: #3a3a3a; }
.rrail i { height: 64px; margin-bottom: 19px; }

.status { height: 54px; flex: none; border-top: 2px solid #cbcbcb; display: flex; align-items: center; color: #444; }
.s1 { margin-left: 29px; color: #333; } .s2 { margin: 2px 0 0 10px; } .s3 { margin-left: 24px; font-size: 24.600px; }
.sr { margin-left: auto; display: flex; align-items: center; padding-right: 96px; }
.s4 { margin: -3px 13px 0 0; font-size: 24.100px; } .s5 { margin-right: 18px; } .s6 { margin-right: 28px; stroke-width: 1.700; }
.tile { width: 44px; height: 44px; border-radius: 3px; background: #7d858c; color: #fff; }
.screen .tile { display: flex; align-items: center; justify-content: center; }
.vs { width: 2px; height: 52px; background: #cbcbcb; margin: 0 21px 0 19px; }
.s7 { margin: 0 38px 0 29px; } .s8 { margin-right: 43px; } .s9 { margin-right: 42px; font-size: 24.600px; }

.dock { height: 139px; flex: none; background: #3d3d3d; display: flex; align-items: center; padding-left: 39px; }
.d1 { margin-right: 44px; } .d2 { margin-right: 45px; } .d3 { margin-right: 46px; } .d4 { margin-right: 46px; } .d5 { margin-right: 41px; }
.dsep { width: 1px; height: 84px; background: #555; margin: 0 21px 0 29px; }
.active { width: 105px; height: 106px; border-radius: 25px; background: #616161; margin: 0 26px 0 17px; display: flex; align-items: center; justify-content: center; }
.d6 { margin-right: 46px; }
</style>
